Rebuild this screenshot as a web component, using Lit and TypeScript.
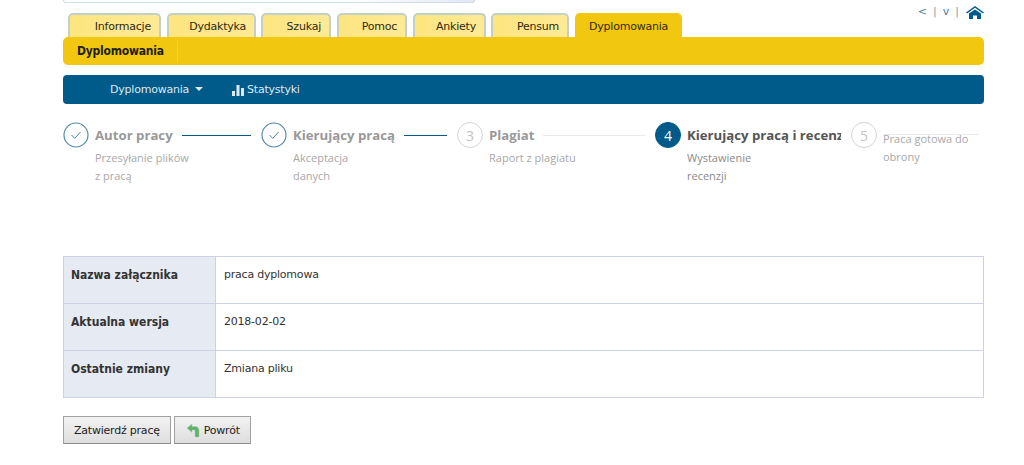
import { LitElement, html, css, svg } from "lit";
import { customElement } from "lit/decorators.js";

const tabs = [
  ["Informacje", 93, 6], ["Dydaktyka", 89, 5], ["Szukaj", 70, 6], ["Pomoc", 70, 6],
  ["Ankiety", 73, 5], ["Pensum", 78, 6],
] as const;

const check = svg`<svg viewBox="0 0 26 26" width="26" height="26"><circle cx="13" cy="13" r="12" fill="#fff" stroke="#4f86a6" stroke-width="1.1"/><path d="M8.5 13l3.2 3.4 5.8-6.4" fill="none" stroke="#4f86a6" stroke-width="1"/></svg>`;

const steps = [
  { mark: "done", title: "Autor pracy", desc: ["Przesyłanie plików", "z pracą"], line: "on" },
  { mark: "done", title: "Kierujący pracą", desc: ["Akceptacja", "danych"], line: "on" },
  { mark: "3", title: "Plagiat", desc: ["Raport z plagiatu"], line: "off" },
  { mark: "4", title: "Kierujący pracą i recenzenci", desc: ["Wystawienie", "recenzji"], line: "", active: true },
  { mark: "5", title: "", desc: ["Praca gotowa do", "obrony"], line: "off", last: true },
];

@customElement("app-root")
export class AppRoot extends LitElement {
  static styles = css`
    :host { display: block; width: 1024px; height: 465px; overflow: hidden; background: #fff; font-family: "DejaVu Sans", sans-serif; font-size: 11px; letter-spacing: -0.22px; color: #333; }
    .page { padding: 0 40px 0 63px; }
    .search { width: 412px; height: 3px; box-sizing: border-box; border: 1px solid #cfdde6; border-top: 0; border-radius: 0 0 5px 5px; background: linear-gradient(90deg, #fff 70%, #e3e7f3); }
    .topline { height: 10px; position: relative; }
    .tools { position: absolute; right: 0; top: 2px; display: flex; align-items: center; gap: 6px; color: #4d7f9e; font-size: 11px; line-height: 14px; letter-spacing: 0; }
    .tools .sep { color: #8a9aa5; }
    .tools svg { margin-left: 1px; }
    .tabs { display: flex; padding-left: 5px; height: 24px; }
    .tab { box-sizing: border-box; height: 24px; margin-right: var(--gap); width: var(--w); padding: 4px 8px 0 0; text-align: right; background: linear-gradient(90deg, #fde57f, #feea96); border: 2px solid #c3d0c6; border-bottom: 0; border-radius: 5px 5px 0 0; line-height: 15px; color: #2f2a10; }
    .tab.on { background: #f2c70f; border: 0; padding: 6px 14px 0 14px; width: 107px; margin: 0; line-height: 15px; }
    .yellow { height: 28px; background: #f2c70f; border-radius: 5px; display: flex; align-items: center; }
    .yellow b { padding: 0 13px 0 14px; border-right: 1px solid #e6cf6a; line-height: 21px; color: #1e1e1e; font-stretch: condensed; font-size: 12px; }
    .blue { margin-top: 10px; height: 29px; background: #005a8a; border-radius: 4px; display: flex; align-items: center; padding-left: 47px; color: #dfe9f0; }
    .blue .caret { display: inline-block; margin-left: 6px; vertical-align: 2px; border: 4px solid transparent; border-top-color: #dfe9f0; border-bottom: 0; }
    .blue .stat { margin-left: 29px; display: flex; align-items: center; gap: 3px; }
    .steps { display: grid; grid-template-columns: 198px 196px 198px 196px 133px; margin-top: 18px; height: 134px; font-family: "Open Sans", sans-serif; letter-spacing: 0; }
    .step { display: flex; gap: 6px; padding-right: 10px; overflow: hidden; }
    .step:last-child { padding-right: 5px; }
    .mark { flex: none; width: 26px; height: 26px; box-sizing: border-box; border-radius: 50%; display: flex; align-items: center; justify-content: center; border: 1px solid #d5d5d5; color: #c4c4c4; font-size: 14px; }
    .mark.check { border: 0; }
    .mark.now { background: #005a8a; border-color: #005a8a; color: #fff; }
    .body { flex: 1; min-width: 0; }
    .head { display: flex; align-items: center; height: 26px; }
    .title { font-weight: 700; font-size: 13.2px; color: #999; white-space: nowrap; padding-right: 9px; overflow: hidden; }
    .active .title { color: #555; padding-right: 0; }
    .rule { flex: 1; height: 0; border-top: 1px solid #eaeaea; }
    .rule.on { border-top: 1px solid #005a8a; }
    .desc { font-size: 11px; line-height: 17.5px; color: #a8a8a8; margin-top: 1px; }
    .active .desc { color: #8a8a8a; }
    .last .head { height: 13px; align-items: flex-end; }
    .last .desc { margin-top: -5px; }
    .table { display: grid; grid-template-columns: 152px 1fr; border: 1px solid #ccd1e6; border-bottom: 0; }
    .k, .v { height: 47px; box-sizing: border-box; border-bottom: 1px solid #ccd1e6; padding: 10px 8px; line-height: 16px; }
    .k { background: #e6eaf3; border-right: 1px solid #ccd1e6; font-weight: 700; font-stretch: condensed; font-size: 12px; padding-left: 7px; letter-spacing: 0; color: #333; }
    .table .v { color: #333; }
    .actions { display: flex; gap: 3px; margin-top: 18px; }
    button { font: inherit; letter-spacing: inherit; height: 28px; box-sizing: border-box; color: #222; background: linear-gradient(#f2f2f2, #dedede); border: 1px solid #a0a0a0; border-bottom-color: #8a8a8a; padding: 0 10px; display: flex; align-items: center; gap: 4px; margin: 0; }
    button.back { padding: 0 10px 0 11px; }
  `;

  render() {
    return html`<div class="page">
      <div class="search"></div>
      <div class="topline">
        <div class="tools"><span>&lt;</span><span class="sep">|</span><span>v</span><span class="sep">|</span>
          <svg viewBox="0 0 18 13" width="18" height="13"><path d="M9 0L0 6.5l1 1 8-5.8 8 5.8 1-1z M9 3.4L3 7.6V13h4V9.5h4V13h4V7.6z" fill="#005a8a"/></svg>
        </div>
      </div>
      <div class="tabs">
        ${tabs.map(([t, w, g]) => html`<div class="tab" style="--w:${w}px;--gap:${g}px">${t}</div>`)}
        <div class="tab on">Dyplomowania</div>
      </div>
      <div class="yellow"><b>Dyplomowania</b></div>
      <div class="blue"><span>Dyplomowania<i class="caret"></i></span>
        <span class="stat"><svg viewBox="0 0 12 12" width="12" height="12"><path d="M0 7h3v5H0zM4.5 1h3v11h-3zM9 4h3v8H9z" fill="#dfe9f0"/></svg>Statystyki</span>
      </div>
      <div class="steps">
        ${steps.map((s) => html`<div class="step ${s.active ? "active" : ""} ${s.last ? "last" : ""}">
          <div class="mark ${s.mark === "done" ? "check" : ""} ${s.active ? "now" : ""}">${s.mark === "done" ? check : s.mark}</div>
          <div class="body">
            <div class="head">${s.title ? html`<span class="title">${s.title}</span>` : ""}${s.line ? html`<span class="rule ${s.line === "on" ? "on" : ""}"></span>` : ""}</div>
            <div class="desc">${s.desc.map((d, i) => html`${i ? html`<br />` : ""}${d}`)}</div>
          </div>
        </div>`)}
      </div>
      <div class="table">
        <div class="k">Nazwa załącznika</div><div class="v">praca dyplomowa</div>
        <div class="k">Aktualna wersja</div><div class="v">2018-02-02</div>
        <div class="k">Ostatnie zmiany</div><div class="v">Zmiana pliku</div>
      </div>
      <div class="actions">
        <button>Zatwierdź pracę</button>
        <button class="back"><svg viewBox="0 0 14 16" width="14" height="16"><path d="M1 6l5-4v2.6h3c2.4 0 4 1.6 4 4V15H9V9c0-.6-.4-1-1-1H6v2.4z" fill="#5fb36a" stroke="#a5cfa8" stroke-width=".5"/></svg>Powrót</button>
      </div>
    </div>`;
  }
}
